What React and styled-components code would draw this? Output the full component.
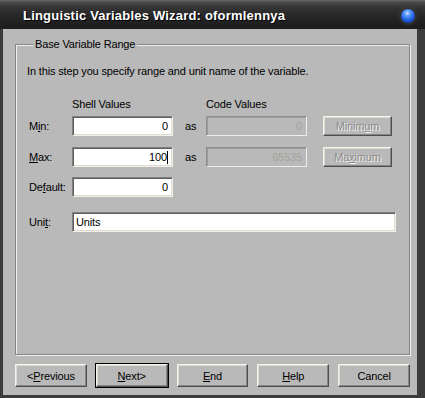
import React from 'react';
import styled, { createGlobalStyle, css } from 'styled-components';

const GlobalStyle = createGlobalStyle`
  html, body {
    margin: 0;
    padding: 0;
    background: #3a3a3a;
  }
`;

const Window = styled.div`
  width: 425px;
  height: 398px;
  display: flex;
  flex-direction: column;
  background: #3c3c3c;
  font-family: "Liberation Sans", Arial, sans-serif;
  font-size: 11px;
  letter-spacing: -0.15px;
  color: #000;
  overflow: hidden;
`;

const TitleBar = styled.div`
  height: 29px;
  flex: none;
  display: flex;
  align-items: center;
  justify-content: space-between;
  padding: 0 10px 0 23px;
  box-sizing: border-box;
  background: linear-gradient(#6c6c6c 0, #4a4a4a 2px, #333 8px, #242424 18px, #1c1c1c 29px);
`;

const Title = styled.div`
  color: #fff;
  font-weight: bold;
  font-size: 13px;
  letter-spacing: 0.2px;
  text-shadow: 1px 1px 0 #000;
  padding-top: 2px;
`;

const Orb = styled.span`
  width: 14px;
  height: 14px;
  border-radius: 50%;
  background: radial-gradient(circle at 45% 30%, #cfe4ff 0, #5b9bff 22%, #1f5fe0 55%, #0b2f90 100%);
  box-shadow: 0 0 0 1px #2a2a2a, 0 0 2px 1px #555;
  margin-top: 2px;
`;

const Body = styled.div`
  flex: 1;
  margin: 0 8px 3px 3px;
  background: #b9b9b9;
  display: flex;
  flex-direction: column;
  padding: 9px 7px 8px 12px;
  min-height: 0;
`;

const Group = styled.fieldset`
  flex: 1;
  margin: 0;
  padding: 14px 0 0 11px;
  min-width: 0;
  border: 1px solid #858585;
  box-shadow: 1px 1px 0 #f2f1ea, inset 1px 1px 0 #f2f1ea;
`;

const Legend = styled.legend`
  padding: 0 2px 0 2px;
  margin-left: 6px;
  background: #b9b9b9;
  line-height: 13px;
`;

const Intro = styled.div`
  line-height: 13px;
`;

const Form = styled.div`
  display: grid;
  grid-template-columns: 43px 101px 33px 101px 16px 69px;
  align-items: center;
  margin: 20px 0 0 2px;
`;

const Header = styled.div`
  grid-column: ${p => p.col};
  line-height: 13px;
  margin-bottom: 5px;
`;

const Label = styled.div`
  grid-column: 1;
  margin-top: ${p => p.gap || 0}px;
`;

const As = styled.div`
  padding-left: 12px;
  margin-top: ${p => p.gap || 0}px;
`;

const Field = styled.div`
  height: 20px;
  box-sizing: border-box;
  display: flex;
  align-items: center;
  justify-content: ${p => (p.left ? 'flex-start' : 'flex-end')};
  padding: 0 4px 0 3px;
  margin-top: ${p => p.gap || 0}px;
  background: ${p => (p.disabled ? '#b9b9b9' : '#fff')};
  color: ${p => (p.disabled ? '#a3a39c' : '#000')};
  border: 1px solid;
  border-color: ${p => (p.disabled ? '#8e8e8e #eeede6 #eeede6 #8e8e8e' : '#808080 #f2f1ea #f2f1ea #808080')};
  box-shadow: ${p => (p.disabled ? 'inset 1px 1px 0 #9c9c9c' : 'inset 1px 1px 0 #5e5e5e, inset -1px -1px 0 #dedcd2')};
  ${p => p.wide && css`
    grid-column: 2 / -1;
    width: 324px;
  `}
`;

const Caret = styled.span`
  display: inline-block;
  width: 1px;
  height: 13px;
  background: #000;
`;

const Button = styled.div`
  box-sizing: border-box;
  width: ${p => p.w || 72}px;
  height: ${p => p.h || 23}px;
  margin-top: ${p => p.gap || 0}px;
  display: flex;
  align-items: center;
  justify-content: center;
  background: #b9b9b9;
  border: 1px solid;
  border-color: #f4f3ec #4e4e4e #4e4e4e #f4f3ec;
  box-shadow: inset -1px -1px 0 #868686, inset 1px 1px 0 #dcdbd4;
  color: ${p => (p.disabled ? '#8c8c8c' : '#000')};
  text-shadow: ${p => (p.disabled ? '1px 1px 0 #f4f4f0' : 'none')};
  ${p => p.primary && css`
    outline: 1px solid #000;
    outline-offset: 0;
  `}
`;

const Footer = styled.div`
  display: flex;
  gap: 9px;
  margin-top: 9px;
  flex: none;
`;

const Key = styled.u`
  text-decoration: underline;
  text-underline-offset: 1px;
`;

export default function App() {
  return (
    <Window>
      <GlobalStyle />
      <TitleBar>
        <Title>Linguistic Variables Wizard: oformlennya</Title>
        <Orb />
      </TitleBar>
      <Body>
        <Group>
          <Legend>Base Variable Range</Legend>
          <Intro>In this step you specify range and unit name of the variable.</Intro>
          <Form>
            <Header col={2}>Shell Values</Header>
            <Header col={4}>Code Values</Header>
            <div />
            <div />

            <Label>M<Key>i</Key>n:</Label>
            <Field>0</Field>
            <As>as</As>
            <Field disabled>0</Field>
            <div />
            <Button disabled w={69} h={20}>Minim<Key>u</Key>m</Button>

            <Label gap={11}><Key>M</Key>ax:</Label>
            <Field gap={11}>100<Caret /></Field>
            <As gap={11}>as</As>
            <Field disabled gap={11}>65535</Field>
            <div />
            <Button disabled w={69} h={20} gap={11}>Ma<Key>x</Key>imum</Button>

            <Label gap={10}>De<Key>f</Key>ault:</Label>
            <Field gap={10}>0</Field>
            <div />
            <div />
            <div />
            <div />

            <Label gap={15}>Uni<Key>t</Key>:</Label>
            <Field wide left gap={15}>Units</Field>
          </Form>
        </Group>
        <Footer>
          <Button>&lt;<Key>P</Key>revious</Button>
          <Button primary><Key>N</Key>ext&gt;</Button>
          <Button><Key>E</Key>nd</Button>
          <Button><Key>H</Key>elp</Button>
          <Button>Cancel</Button>
        </Footer>
      </Body>
    </Window>
  );
}
